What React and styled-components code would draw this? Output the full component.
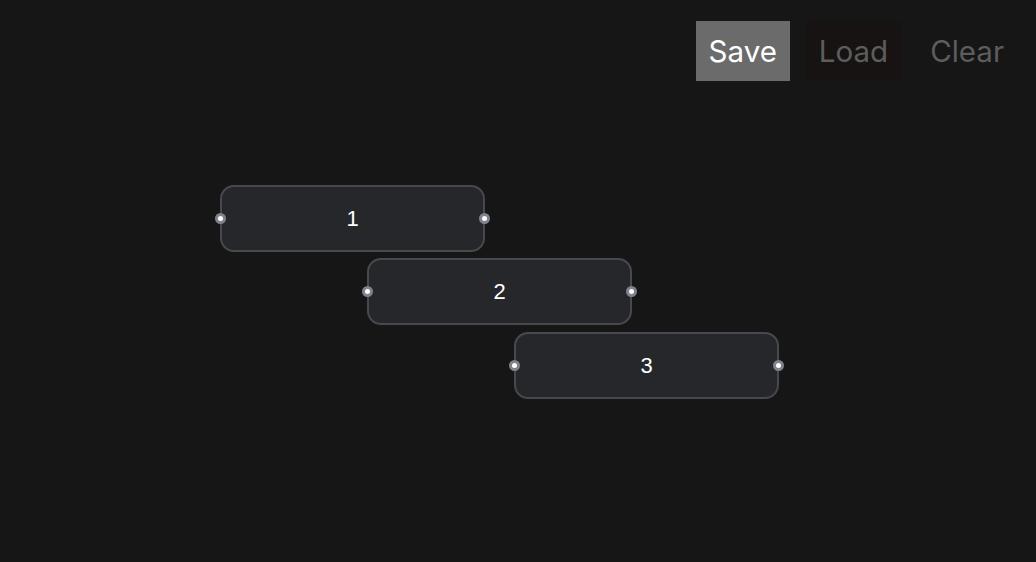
import React from 'react';
import styled, { createGlobalStyle } from 'styled-components';

const Global = createGlobalStyle`
  html, body { margin: 0; padding: 0; background: #161616; }
  body { font-family: Inter, "Liberation Sans", sans-serif; }
  #root { width: 1036px; height: 562px; }
`;

const Page = styled.div`
  position: relative;
  width: 1036px;
  height: 562px;
  background: #161616;
  overflow: hidden;
`;

const Toolbar = styled.div`
  display: flex;
  justify-content: flex-end;
  gap: 16px;
  padding: 21px 19px 0 0;
`;

const Button = styled.button`
  box-sizing: border-box;
  height: 60px;
  padding: 0 13px;
  min-width: 94px;
  border: none;
  font-family: Inter, "Liberation Sans", sans-serif;
  font-size: 29.5px;
  font-weight: 400;
  background: ${({ variant }) =>
    variant === 'active' ? '#6b6b6b' : variant === 'dim' ? '#171312' : 'transparent'};
  color: ${({ variant }) => (variant === 'active' ? '#ffffff' : '#5d5d5d')};
  cursor: pointer;
`;

const Canvas = styled.div`
  position: absolute;
  inset: 0;
  pointer-events: none;
`;

const Node = styled.div`
  position: absolute;
  box-sizing: border-box;
  width: 265px;
  height: 67px;
  border-radius: 14px;
  background: #26272b;
  border: 2px solid #48494f;
  display: flex;
  align-items: center;
  justify-content: center;
  color: #ffffff;
  font-family: "Liberation Sans", Arial, sans-serif;
  font-size: 22px;
`;

const Handle = styled.span`
  position: absolute;
  top: 50%;
  ${({ side }) => (side === 'left' ? 'left: -7px;' : 'right: -7px;')}
  width: 5px;
  height: 5px;
  margin-top: -5.5px;
  border-radius: 50%;
  background: #ffffff;
  border: 3px solid #80838d;
`;

const nodes = [
  { id: 1, x: 220, y: 185 },
  { id: 2, x: 367, y: 258 },
  { id: 3, x: 514, y: 332 },
];

export default function App() {
  return (
    <Page>
      <Global />
      <Toolbar>
        <Button variant="active">Save</Button>
        <Button variant="dim">Load</Button>
        <Button>Clear</Button>
      </Toolbar>
      <Canvas>
        {nodes.map((n) => (
          <Node key={n.id} style={{ left: n.x, top: n.y }}>
            <Handle side="left" />
            {n.id}
            <Handle side="right" />
          </Node>
        ))}
      </Canvas>
    </Page>
  );
}
